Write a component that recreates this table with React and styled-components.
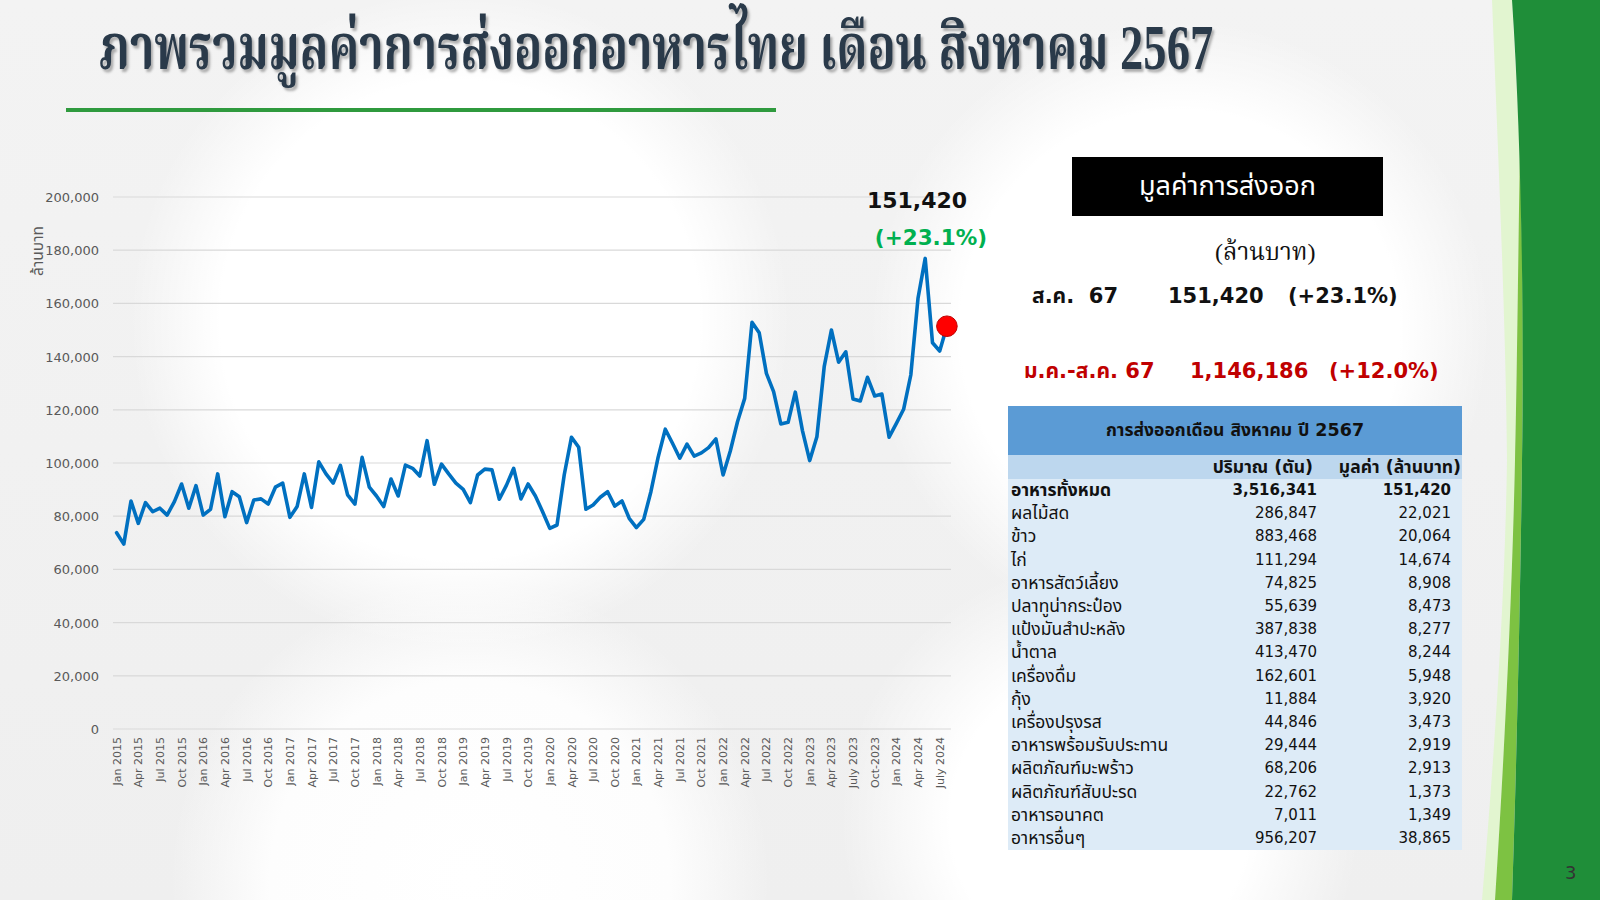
import React from 'react';
import styled, { createGlobalStyle } from 'styled-components';

const THAI = `"Noto Sans Thai", "Noto Sans Thai UI", "Noto Sans Thai Looped", "Noto Serif Thai", Garuda, Loma, Waree, "Tlwg Typo", Kinnari, Norasi, sans-serif`;
const SANS = `"DejaVu Sans", ${THAI}`;
const SERIF_THAI = `"Liberation Serif", "Noto Serif Thai", "Noto Sans Thai Looped", "Noto Sans Thai", Kinnari, Norasi, serif`;

const GlobalStyle = createGlobalStyle`
  html, body { margin: 0; padding: 0; background: #fff; }
  body { font-family: ${SANS}; }
`;

const Slide = styled.div`
  position: relative;
  width: 1600px;
  height: 900px;
  overflow: hidden;
  background:
    radial-gradient(circle at 460px 320px, #ffffff 0, #ffffff 240px, rgba(255,255,255,0) 330px),
    radial-gradient(circle at 1180px 330px, #ffffff 0, #ffffff 220px, rgba(255,255,255,0) 310px),
    radial-gradient(circle at 470px 880px, #ffffff 0, #fdfdfd 200px, rgba(255,255,255,0) 300px),
    radial-gradient(circle at 1100px 820px, #ffffff 0, #ffffff 150px, rgba(255,255,255,0) 260px),
    linear-gradient(#f3f3f3, #efefef);
`;

const Header = styled.header`
  height: 150px;
  display: flex;
  flex-direction: column;
  align-items: flex-start;
`;

const Title = styled.h1`
  margin: 0 0 0 99px;
  padding: 8px 0 0 0;
  height: 92px;
  box-sizing: border-box;
  font-family: ${SERIF_THAI};
  font-weight: 700;
  font-size: 64px;
  line-height: 80px;
  color: #2a3a4a;
  text-shadow: 3px 3px 3px rgba(0, 0, 0, 0.3);
  white-space: nowrap;
  transform: scaleX(0.727);
  transform-origin: 0 0;
`;

const Underline = styled.div`
  margin: 16px 0 0 66px;
  width: 710px;
  height: 4px;
  background: #2f9a3e;
`;

const Body = styled.main`
  display: flex;
  align-items: flex-start;
`;

const ChartSvg = styled.svg`
  display: block;
  margin-top: 30px;
  width: 1000px;
  height: 640px;
  flex: none;
`;

const RightPanel = styled.section`
  margin: 7px 0 0 8px;
  width: 454px;
  display: flex;
  flex-direction: column;
`;

const BlackBox = styled.div`
  margin-left: 64px;
  width: 311px;
  height: 59px;
  background: #000;
  color: #fff;
  font-family: ${THAI};
  font-size: 27px;
  display: flex;
  align-items: center;
  justify-content: center;
`;

const Unit = styled.div`
  height: 60px;
  box-sizing: border-box;
  padding: 14px 0 0 207px;
  font-family: ${SERIF_THAI};
  font-size: 24px;
  color: #111;
  display: flex;
  align-items: center;
`;

const StatRow = styled.div`
  display: flex;
  align-items: center;
  height: 40px;
  padding-left: ${p => p.$pad}px;
  margin-top: ${p => p.$top || 0}px;
  font-family: ${SANS};
  font-weight: 700;
  font-size: 21px;
  color: ${p => p.$color || '#111'};
  white-space: nowrap;
`;

const StatCell = styled.span`
  width: ${p => (p.$w ? `${p.$w}px` : 'auto')};
  flex: none;
`;

const Table = styled.table`
  margin-top: 15px;
  width: 454px;
  border-collapse: collapse;
  table-layout: fixed;
  font-family: ${SANS};
  font-size: 15px;
  color: #111;
`;

const TitleCell = styled.th`
  height: 49px;
  padding: 0;
  background: #5b9bd5;
  font-weight: 700;
  font-size: 17.5px;
  text-align: center;
`;

const HeadCell = styled.th`
  height: 24px;
  padding: 0 ${p => p.$pr || 0}px 0 0;
  background: #bdd7ee;
  font-weight: 700;
  font-size: 17.5px;
  line-height: 22px;
  text-align: right;
  white-space: nowrap;
`;

const Cell = styled.td`
  height: 23.2px;
  padding: 0 ${p => p.$pr || 0}px 0 0;
  background: #ddebf7;
  font-weight: ${p => (p.$bold ? 700 : 400)};
  text-align: right;
  white-space: nowrap;
  line-height: 23px;
`;

const NameCell = styled.td`
  height: 23.2px;
  padding: 0 0 0 3px;
  background: #ddebf7;
  font-weight: ${p => (p.$bold ? 700 : 400)};
  font-size: 17.5px;
  text-align: left;
  white-space: nowrap;
  line-height: 23px;
`;

const GreenBand = styled.svg`
  position: absolute;
  top: 0;
  left: 1460px;
  width: 140px;
  height: 900px;
`;

const PageNo = styled.div`
  position: absolute;
  left: 1565px;
  top: 862px;
  font-family: "DejaVu Sans", sans-serif;
  font-size: 18px;
  color: #333;
`;

const DATA = [
  73.8, 69.5, 85.7, 77.3, 85.1, 81.7, 83.0, 80.4, 85.5, 92.1, 83.0, 91.5,
  80.4, 82.6, 95.9, 79.8, 89.2, 87.3, 77.6, 86.1, 86.5, 84.6, 90.9, 92.4,
  79.6, 83.6, 95.9, 83.3, 100.4, 95.9, 92.4, 99.1, 88.0, 84.5, 102.1, 90.9,
  87.6, 83.6, 94.0, 87.6, 99.2, 98.0, 95.1, 108.4, 92.0, 99.6, 95.9, 92.4,
  90.1, 85.1, 95.5, 97.7, 97.4, 86.4, 91.7, 98.0, 86.5, 92.1, 87.6, 81.7,
  75.4, 76.7, 95.5, 109.7, 105.9, 82.6, 84.2, 87.1, 89.2, 83.8, 85.7, 79.2,
  75.7, 78.8, 89.2, 102.1, 112.7, 107.4, 101.8, 107.1, 102.6, 103.8, 105.8, 109.1,
  95.5, 104.5, 115.5, 124.3, 152.9, 149.0, 133.7, 126.8, 114.7, 115.3, 126.6, 112.1,
  100.9, 109.9, 136.2, 150.0, 137.9, 141.8, 124.1, 123.3, 132.2, 125.2, 125.9, 109.7,
  114.9, 120.2, 133.1, 161.9, 176.9, 145.2, 142.1, 151.42,
];

const xAt = i => 116.6 + 7.22 * i;
const yAt = v => 729 - v * 2.66;

const MONTHS = ['Jan', 'Apr', 'Jul', 'Oct'];
const xLabel = i => {
  const year = 2015 + Math.floor(i / 12);
  const m = (i % 12) / 3;
  if (year === 2023 && m === 2) return 'July 2023';
  if (year === 2023 && m === 3) return 'Oct-2023';
  if (year === 2024 && m === 2) return 'July 2024';
  return `${MONTHS[m]} ${year}`;
};

function Chart() {
  const pts = DATA.map((v, i) => `${xAt(i).toFixed(1)},${yAt(v).toFixed(1)}`).join(' ');
  const grid = Array.from({ length: 11 }, (_, k) => k);
  const ticks = Array.from({ length: 39 }, (_, k) => k * 3);
  const last = DATA.length - 1;
  return (
    <ChartSvg viewBox="0 180 1000 640">
      {grid.map(k => {
        const y = 729 - k * 53.2;
        return (
          <g key={k}>
            <line x1="113" x2="951" y1={y} y2={y} stroke="#d9d9d9" strokeWidth="1.2" />
            <text x="99" y={y + 5} textAnchor="end" fontSize="13" fill="#595959" fontFamily="DejaVu Sans">
              {(k * 20000).toLocaleString('en-US')}
            </text>
          </g>
        );
      })}
      <text transform="translate(43 251) rotate(-90)" textAnchor="middle" fontSize="15.5" fill="#595959" fontFamily={THAI}>
        ล้านบาท
      </text>
      {ticks.map(i => (
        <text
          key={i}
          transform={`translate(${(xAt(i) + 4).toFixed(1)} 737) rotate(-90)`}
          textAnchor="end"
          fontSize="11"
          fill="#595959"
          fontFamily="DejaVu Sans"
        >
          {xLabel(i)}
        </text>
      ))}
      <polyline points={pts} fill="none" stroke="#0070c0" strokeWidth="3.6" strokeLinejoin="round" strokeLinecap="round" />
      <circle cx={xAt(last)} cy={yAt(DATA[last])} r="10.3" fill="#ff0000" stroke="#c00000" strokeWidth="1" />
      <text x="917" y="208" textAnchor="middle" fontSize="22" fontWeight="700" fill="#111" fontFamily="DejaVu Sans">
        151,420
      </text>
      <text x="931" y="245" textAnchor="middle" fontSize="21.5" fontWeight="700" fill="#00b050" fontFamily="DejaVu Sans">
        (+23.1%)
      </text>
    </ChartSvg>
  );
}

const ROWS = [
  ['อาหารทั้งหมด', '3,516,341', '151,420', true],
  ['ผลไม้สด', '286,847', '22,021'],
  ['ข้าว', '883,468', '20,064'],
  ['ไก่', '111,294', '14,674'],
  ['อาหารสัตว์เลี้ยง', '74,825', '8,908'],
  ['ปลาทูน่ากระป๋อง', '55,639', '8,473'],
  ['แป้งมันสำปะหลัง', '387,838', '8,277'],
  ['น้ำตาล', '413,470', '8,244'],
  ['เครื่องดื่ม', '162,601', '5,948'],
  ['กุ้ง', '11,884', '3,920'],
  ['เครื่องปรุงรส', '44,846', '3,473'],
  ['อาหารพร้อมรับประทาน', '29,444', '2,919'],
  ['ผลิตภัณฑ์มะพร้าว', '68,206', '2,913'],
  ['ผลิตภัณฑ์สับปะรด', '22,762', '1,373'],
  ['อาหารอนาคต', '7,011', '1,349'],
  ['อาหารอื่นๆ', '956,207', '38,865'],
];

function ExportTable() {
  return (
    <Table>
      <colgroup>
        <col style={{ width: 200 }} />
        <col style={{ width: 110 }} />
        <col style={{ width: 144 }} />
      </colgroup>
      <thead>
        <tr>
          <TitleCell colSpan={3}>การส่งออกเดือน สิงหาคม ปี 2567</TitleCell>
        </tr>
        <tr>
          <HeadCell />
          <HeadCell $pr={5}>ปริมาณ (ตัน)</HeadCell>
          <HeadCell $pr={1}>มูลค่า (ล้านบาท)</HeadCell>
        </tr>
      </thead>
      <tbody>
        {ROWS.map(([name, qty, val, bold]) => (
          <tr key={name}>
            <NameCell $bold={bold}>{name}</NameCell>
            <Cell $pr={1} $bold={bold}>{qty}</Cell>
            <Cell $pr={11} $bold={bold}>{val}</Cell>
          </tr>
        ))}
      </tbody>
    </Table>
  );
}

export default function App() {
  return (
    <>
      <GlobalStyle />
      <Slide>
        <Header>
          <Title>ภาพรวมมูลค่าการส่งออกอาหารไทย เดือน สิงหาคม 2567</Title>
          <Underline />
        </Header>
        <Body>
          <Chart />
          <RightPanel>
            <BlackBox>มูลค่าการส่งออก</BlackBox>
            <Unit>(ล้านบาท)</Unit>
            <StatRow $pad={24}>
              <StatCell $w={136}>ส.ค.&nbsp;&nbsp;67</StatCell>
              <StatCell $w={120}>151,420</StatCell>
              <StatCell>(+23.1%)</StatCell>
            </StatRow>
            <StatRow $pad={16} $top={35} $color="#c00000">
              <StatCell $w={166}>ม.ค.-ส.ค. 67</StatCell>
              <StatCell $w={139}>1,146,186</StatCell>
              <StatCell>(+12.0%)</StatCell>
            </StatRow>
            <ExportTable />
          </RightPanel>
        </Body>
        <GreenBand viewBox="0 0 140 900" preserveAspectRatio="none">
          <path
            d="M32 0 C38 150 46 330 47 460 C45 600 34 760 22 900 L35 900 C44 760 52 600 55 460 C57 380 58 260 60 150 C57 90 54 40 52 0 Z"
            fill="#e2f5d0"
          />
          <path
            d="M60 150 C58 260 57 380 55 460 C52 600 44 760 35 900 L52 900 C56 780 60 620 62 460 C64 330 62 220 60 150 Z"
            fill="#7dc242"
          />
          <path d="M52 0 C62 150 64 330 62 460 C60 620 56 780 52 900 L140 900 L140 0 Z" fill="#1f8e39" />
        </GreenBand>
        <PageNo>3</PageNo>
      </Slide>
    </>
  );
}
